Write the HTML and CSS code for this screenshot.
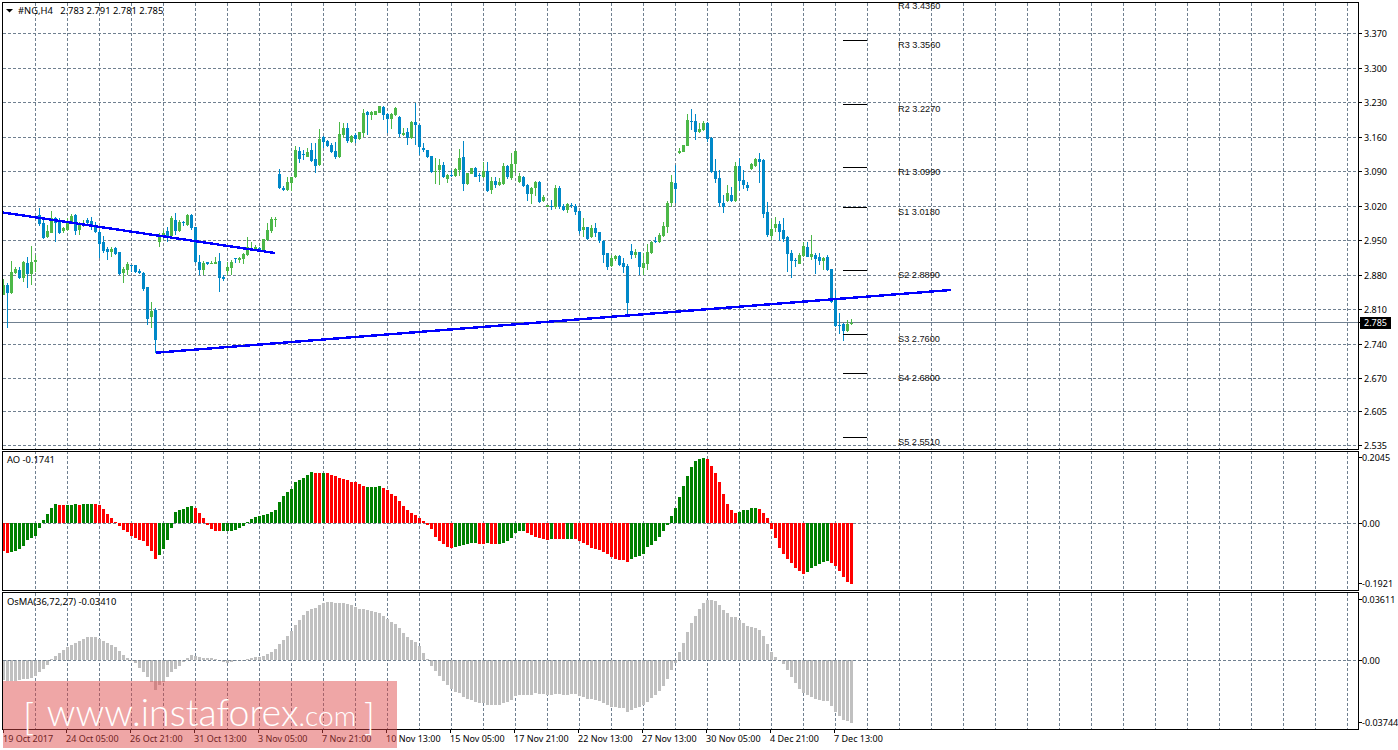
FILE: index.html
```html
<!DOCTYPE html>
<html lang="en">
<head>
<meta charset="utf-8">
<title>#NG,H4</title>
<link rel="stylesheet" href="styles.css">
</head>
<body>
<main class="terminal">
  <section class="pane pane-main"><svg id="main" class="plot"></svg></section>
  <section class="pane pane-ao"><svg id="ao" class="plot"></svg></section>
  <section class="pane pane-osma"><svg id="osma" class="plot"></svg></section>
  <footer class="timeline">
    <span class="time first">19 Oct 2017</span>
    <span class="time">24 Oct 05:00</span>
    <span class="time">26 Oct 21:00</span>
    <span class="time">31 Oct 13:00</span>
    <span class="time">3 Nov 05:00</span>
    <span class="time">7 Nov 21:00</span>
    <span class="time">10 Nov 13:00</span>
    <span class="time">15 Nov 05:00</span>
    <span class="time">17 Nov 21:00</span>
    <span class="time">22 Nov 13:00</span>
    <span class="time">27 Nov 13:00</span>
    <span class="time">30 Nov 05:00</span>
    <span class="time">4 Dec 21:00</span>
    <span class="time">7 Dec 13:00</span>
  </footer>
  <aside class="watermark">
    <span class="bracket">[</span>
    <span class="site">www.instaforex<span class="tld">.com</span></span>
    <span class="bracket close">]</span>
  </aside>
</main>
<script src="chart.js"></script>
</body>
</html>
```
FILE: styles.css
```css
html, body {
  margin: 0;
  padding: 0;
  background: #ffffff;
  overflow: hidden;
}
.terminal {
  position: relative;
  width: 1398px;
  height: 750px;
  padding-top: 2px;
  box-sizing: border-box;
  display: flex;
  flex-direction: column;
  font-family: "Noto Sans", "Liberation Sans", sans-serif;
  font-size: 9px;
  color: #000000;
}
.pane { flex: none; width: 1398px; }
.pane-main { height: 448px; }
.pane-ao { height: 141px; }
.pane-osma { height: 139px; }
.plot { display: block; width: 1398px; height: 100%; shape-rendering: crispEdges; }
.plot text {
  font-family: "Noto Sans", "Liberation Sans", sans-serif;
  font-size: 9px;
  fill: #000000;
  white-space: pre;
}
.plot .legend { font-size: 9.4px; }
.plot .pivot-label {
  font-family: "Liberation Sans", Arial, sans-serif;
  font-size: 9.2px;
  fill: #111111;
}
.plot .price-tag { fill: #ffffff; }
.grid { stroke: #708090; stroke-width: 1; stroke-dasharray: 3 2; fill: none; }
.bid { stroke: #708090; stroke-width: 1; }
.trend { stroke: #0000ff; stroke-width: 2.4; }
.timeline {
  flex: none;
  display: flex;
  height: 20px;
  padding-left: 3px;
}
.time {
  flex: none;
  width: 64px;
  box-sizing: border-box;
  padding-top: 3px;
  line-height: 12px;
  white-space: nowrap;
  position: relative;
}
.time::before {
  content: "";
  position: absolute;
  left: 0;
  top: 0;
  width: 1px;
  height: 3px;
  background: #000000;
}
.time.first { width: 63px; }
.watermark {
  position: absolute;
  left: 3px;
  top: 681px;
  width: 394px;
  height: 67px;
  background: rgba(222, 70, 70, 0.48);
  color: #ffffff;
  font-family: Lato, "Open Sans", sans-serif;
  display: flex;
  align-items: flex-end;
  justify-content: space-between;
  padding: 0 22px 11px 20px;
  box-sizing: border-box;
}
.site {
  font-size: 37.5px;
  line-height: 44px;
  font-weight: 300;
  white-space: nowrap;
  margin-left: 5px;
}
.tld { font-size: 28px; }
.bracket { font-size: 38px; line-height: 44px; font-weight: 300; }
```
FILE: chart.js
```js
var NS = 'http://www.w3.org/2000/svg';
function el(parent, name, attrs, text) {
  var n = document.createElementNS(NS, name);
  for (var k in attrs) n.setAttribute(k, attrs[k]);
  if (text !== undefined) n.textContent = text;
  parent.appendChild(n);
  return n;
}

/* Candles: colour, body top, body bottom, wick top, wick bottom.
   Values read off a 3x crop; part A starts at y 0, part B at y 90. */
var A = 'g855,885,838,885 b855,878,850,985 g816,880,783,882 g807,820,800,822 b810,835,800,838 g786,834,783,845 b790,822,770,863 g786,822,738,855 g780,786,765,815 b645,672,623,678 b670,715,660,718 g693,710,675,715 g655,698,633,700 b655,668,650,725 b665,698,655,703 g683,693,680,700 g663,690,655,692 g648,668,642,670 b645,692,642,705 g672,690,665,705 g668,675,660,680 b660,668,655,672 b663,680,650,690 b678,695,665,698 b695,732,690,773 b725,753,708,760 b746,757,740,780 g746,757,740,770 b745,763,740,765 b757,822,755,825 g806,820,800,848 g792,810,785,825 b796,799,796,815 b796,816,795,820 b812,818,808,822 b820,867,815,872 b862,957,860,975 g933,950,907,985 b929,1019,925,1058 g712,725,700,740 g700,712,690,720 b692,715,680,727 g655,708,648,712 b660,692,640,705 g665,692,660,695 b665,670,662,678 g645,675,642,678 b645,683,642,690 b682,785,680,788 b786,810,765,825 g790,810,782,825 b787,791,785,795 g788,791,783,792 g785,791,770,793 b783,833,760,875 b832,836,825,842 g802,813,785,825 g787,803,780,825 b775,778,775,790 g773,780,770,790 g762,776,758,792 g740,765,712,768 g745,748,725,752 g741,748,735,750 b745,750,740,755 g718,750,718,752 g690,720,668,722 g657,692,652,700 g657,661,650,680 b522,565,507,568 b565,570,558,572 g546,570,532,572 g531,548,530,572 g450,530,437,533 b453,477,440,488 b462,465,450,480 g455,470,445,472 b450,483,430,487 b478,497,430,518 g417,495,388,498 b412,425,408,445 b423,438,420,441 b435,457,430,460 b453,470,425,478 g403,470,367,475 g385,405,368,415 b385,423,370,428 g407,425,405,428 b405,417,400,428 g397,417,395,420 g340,398,327,410 b336,345,332,405 g336,345,332,360 g334,344,334,345 g319,339,318,340 b320,345,318,360 b343,358,340,398 g343,357,340,388 g323,346,320,348 b351,402,348,412 g398,404,385,408 b396,413,385,435 g366,414,364,416 b366,375,310,435 b375,440,372,465 b444,450,430,455 b451,471,450,475 b468,515,468,518 g512,515,475,552 g495,510,478,555 b495,530,487,535 g525,536,522,548';
var B = 'b256,259,240,262 g237,258,233,262 g204,240,177,258 b201,282,153,302 g250,282,248,285 g234,252,233,252 b234,261,230,262 b255,258,248,276 g243,262,216,265 b243,302,216,305 g273,300,262,312 b273,286,262,295 g277,286,265,288 g228,282,220,285 b228,262,225,268 g222,264,190,270 g183,222,180,248 g258,277,250,278 b262,288,258,290 b286,311,282,333 g294,312,292,342 g276,294,272,318 b276,335,272,338 g322,333,316,335 g346,350,345,352 b349,352,330,360 g294,350,285,358 b294,350,288,358 b348,360,342,363 g343,360,340,368 b346,349,340,355 b348,365,342,375 b364,423,362,432 g411,420,385,442 b411,447,410,450 g414,442,405,445 b414,430,400,442 b427,453,425,460 b452,495,450,518 b489,530,489,540 g504,528,495,530 g499,507,494,512 b498,525,495,528 b520,531,505,550 b528,638,522,678 b484,494,462,508 g486,494,478,505 b487,530,486,556 g520,533,490,555 g487,522,463,540 g456,490,452,492 b453,456,440,460 g435,456,430,458 g408,438,396,440 g339,411,333,430 g276,339,255,350 b280,296,225,338 g184,188,175,192 g166,186,165,187 g91,168,72,168 b93,96,57,120 b94,125,72,150 g117,126,100,128 g99,121,94,122 b99,146,95,155 b144,245,142,250 b244,267,207,280 b264,339,240,352 b339,350,315,368 g309,333,285,335 b315,333,292,335 g228,333,215,335 b228,273,205,302 b270,286,240,298 b285,294,276,302 g222,238,220,240 g207,228,203,232 b207,216,190,278 b210,372,208,385 b366,435,336,442 g417,438,388,450 g402,414,380,425 b402,426,392,452 b420,446,385,455 b441,491,438,545 b489,512,480,563 b510,514,503,530 g495,521,490,523 g468,498,455,500 b471,500,455,502 g492,500,435,510 b495,507,488,552 b501,513,490,525 g503,513,500,540 b501,540,495,543 b538,636,536,640 b627,708,600,712 b705,708,668,732 b702,723,698,753 g702,724,690,727 g698,702,687,705';

/* AO bars: colour + crop y of the bar tip (zero at 249) */
var AO = 'r333 r338 g336 g334 g327 g318 g300 g295 g288 g264 g240 g222 g205 g193 r195 r195 g195 g195 g192 r195 g192 g192 g192 r192 r195 r207 r222 r234 r246 r258 r270 r276 r287 r295 r300 r303 r318 r333 r357 g345 g327 g300 g264 g216 g211 g207 g201 g198 r204 r219 r234 r255 r267 r273 r273 g273 g273 g273 g270 g264 g258 g246 g237 g231 g228 g225 g222 g216 g210 g185 g168 g156 g147 g126 g120 g114 g105 g96 r99 r99 g99 r99 r105 r108 r114 r117 r120 r126 r126 r132 r138 g141 g141 g141 g138 r144 r150 r162 r168 r183 r198 r210 r219 r225 r234 r243 r255 r267 r291 r303 r312 r321 r324 g321 g318 g315 g312 g309 g309 r312 r312 g309 r312 r312 g312 g309 g303 g294 g279 g273 g273 r279 r285 r291 r294 r297 r300 g297 r297 r297 r297 g297 g297 r297 r303 r309 r315 r324 r327 r330 r336 r342 r351 r357 r360 r360 r366 g357 g351 g348 g342 g321 g315 g303 g291 g273 g255 g228 g204 g171 g138 g108 g81 g63 g57 g54 r57 r78 r99 r126 r162 r192 r210 r219 g216 g210 g210 g204 g204 r207 r219 r234 r267 r294 r324 r342 r357 r369 r384 r393 r402 g396 g384 g378 g372 g366 g363 r369 r378 r393 r411 r426 r432';

/* OsMA bars: crop y of the bar tip (zero at 660) */
var OS = '720 723 723 723 720 718 717 715 708 696 687 675 658 648 638 630 622 615 608 603 598 591 591 591 597 603 609 615 621 633 645 654 664 670 684 696 712 727 750 736 727 712 696 687 678 667 654 645 648 651 654 654 654 657 660 667 669 667 664 663 660 657 654 651 651 648 642 636 627 612 600 588 573 555 540 525 513 507 504 495 489 486 486 489 489 489 492 495 501 507 507 510 513 516 519 528 537 546 552 564 579 591 600 606 618 639 657 678 693 708 723 735 747 756 759 771 777 780 786 789 789 795 795 795 795 789 786 780 768 765 765 765 765 759 762 762 765 765 762 762 765 765 762 762 768 771 777 777 780 783 789 795 801 801 804 804 816 810 804 801 795 786 774 765 753 738 717 690 669 636 609 576 549 528 507 489 480 480 483 495 510 519 531 531 540 549 558 561 564 570 588 612 636 651 663 672 690 711 729 747 759 765 771 777 780 783 783 798 816 828 840 843 849';

var COL = { g: '#4cb848', b: '#0088c8', r: '#ff0000', d: '#008000', o: '#c0c0c0' };

function setBox(svg, top, h) {
  svg.setAttribute('viewBox', '0 ' + top + ' 1398 ' + h);
}
function vgrid(svg, y1, y2) {
  for (var x = 35; x < 1358; x += 32) {
    el(svg, 'line', { 'class': 'grid', x1: x + .5, x2: x + .5, y1: y1, y2: y2 });
  }
}
function hgrid(svg, y) {
  el(svg, 'line', { 'class': 'grid', x1: 3, x2: 1358, y1: y + .5, y2: y + .5 });
}
function tick(svg, y) {
  el(svg, 'rect', { x: 1358, y: y, width: 4, height: 1, fill: '#000' });
}
function label(svg, x, y, t, cls) {
  var a = { x: x, y: y };
  if (cls) a['class'] = cls;
  el(svg, 'text', a, t);
}
function frame(svg, top, bottom) {
  el(svg, 'rect', { x: 2, y: top, width: 1357, height: 1, fill: '#000' });
  el(svg, 'rect', { x: 2, y: bottom, width: 1357, height: 1, fill: '#000' });
  el(svg, 'rect', { x: 2, y: top, width: 1, height: bottom - top + 1, fill: '#000' });
  el(svg, 'rect', { x: 1358, y: top, width: 1, height: bottom - top + 1, fill: '#000' });
}

/* ---------- main pane ---------- */
(function () {
  var s = document.getElementById('main');
  setBox(s, 2, 448);
  vgrid(s, 3, 449);
  var rows = [[33, '3.370'], [68, '3.300'], [102, '3.230'], [137, '3.160'], [171, '3.090'], [206, '3.020'], [240, '2.950'], [275, '2.880'], [309, '2.810'], [344, '2.740'], [378, '2.670'], [411, '2.605'], [445, '2.535']];
  rows.forEach(function (r) {
    hgrid(s, r[0]);
    tick(s, r[0]);
    label(s, 1364, r[0] + 3.5, r[1]);
  });
  /* bid line */
  el(s, 'line', { 'class': 'bid', x1: 3, x2: 1358, y1: 322.5, y2: 322.5 });

  /* candles */
  function drawSet(str, k0, yOff) {
    str.split(' ').forEach(function (c, i) {
      var v = c.slice(1).split(',').map(Number);
      var col = COL[c[0]];
      var x = 2 + 4 * (k0 + i);
      var yt = Math.round(yOff + v[2] / 3), yb = Math.round(yOff + v[3] / 3);
      el(s, 'rect', { x: x + 1, y: yt, width: 1, height: Math.max(1, yb - yt), fill: col });
      var bt = Math.round(yOff + v[0] / 3), bb = Math.round(yOff + v[1] / 3);
      el(s, 'rect', { x: x, y: bt, width: 3, height: Math.max(1, bb - bt), fill: col });
    });
  }
  drawSet(A, 0, 0);
  drawSet(B, 112, 90);

  /* trend lines */
  el(s, 'line', { 'class': 'trend', x1: 3, y1: 212.5, x2: 275, y2: 253 });
  el(s, 'line', { 'class': 'trend', x1: 156, y1: 352.7, x2: 951, y2: 290 });

  /* pivots */
  [[40, 45, 'R3 3.3560'], [104, 109, 'R2 3.2270'], [167, 172, 'R1 3.0990'], [207, 212, 'S1 3.0180'], [270, 275, 'S2 2.8890'], [334, 339, 'S3 2.7600'], [373, 378, 'S4 2.6800'], [437, 442, 'S5 2.5510'], [null, 6, 'R4 3.4360']].forEach(function (p) {
    if (p[0] !== null) el(s, 'rect', { x: 843, y: p[0], width: 24, height: 1, fill: '#000' });
    label(s, 898, p[1] + 3.2, p[2], 'pivot-label');
  });

  /* legend */
  el(s, 'polygon', { points: '6,9 13,9 9.5,12.5', fill: '#000', 'shape-rendering': 'auto' });
  label(s, 18, 13.5, '#NG,H4   2.783 2.791 2.781 2.785', 'legend');

  /* frame */
  frame(s, 2, 449);

  /* current price tag */
  el(s, 'rect', { x: 1360, y: 317, width: 31, height: 12, fill: '#000' });
  label(s, 1364, 326, '2.785', 'price-tag');
  tick(s, 322);
})();

/* ---------- AO pane ---------- */
(function () {
  var s = document.getElementById('ao');
  setBox(s, 450, 141);
  vgrid(s, 451, 590);
  hgrid(s, 523);
  AO.split(' ').forEach(function (c, i) {
    var z = Number(c.slice(1));
    var y = Math.round(440 + z / 3);
    var top = Math.min(y, 523), h = Math.max(1, Math.abs(y - 523));
    el(s, 'rect', { x: 2 + 4 * i, y: top, width: 3, height: h, fill: c[0] === 'g' ? COL.d : COL.r });
  });
  frame(s, 451, 590);
  label(s, 7, 462.5, 'AO -0.1741', 'legend');
  [[457, '0.2045'], [523, '0.00'], [583, '-0.1921']].forEach(function (r) {
    tick(s, r[0]);
    label(s, 1362, r[0] + 3.5, r[1]);
  });
})();

/* ---------- OsMA pane ---------- */
(function () {
  var s = document.getElementById('osma');
  setBox(s, 591, 139);
  vgrid(s, 593, 729);
  OS.split(' ').forEach(function (c, i) {
    var y = Math.round(440 + Number(c) / 3);
    var top = Math.min(y, 660), h = Math.max(1, Math.abs(y - 660));
    el(s, 'rect', { x: 2 + 4 * i, y: top, width: 3, height: h, fill: COL.o });
  });
  hgrid(s, 660);
  frame(s, 592, 729);
  label(s, 7, 604.5, 'OsMA(36,72,27) -0.03410', 'legend');
  [[599, '0.03611'], [660, '0.00'], [722, '-0.03744']].forEach(function (r) {
    tick(s, r[0]);
    label(s, 1362, r[0] + 3.5, r[1]);
  });
})();
```
